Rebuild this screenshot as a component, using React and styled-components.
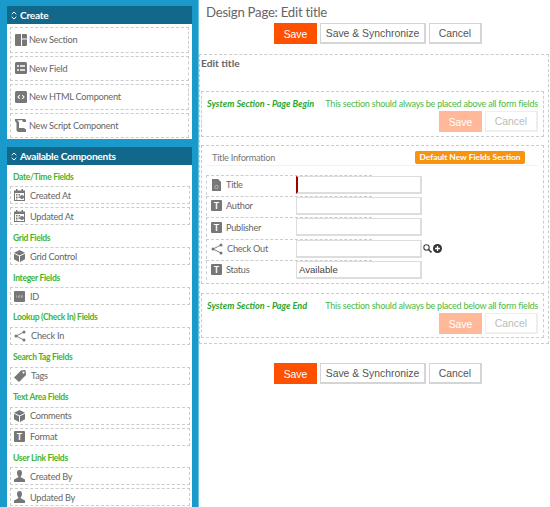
import React from "react";
import styled, { createGlobalStyle } from "styled-components";

const Global = createGlobalStyle`
  html, body { margin: 0; padding: 0; background: #fff; }
  body { font-family: "Lato", "Liberation Sans", sans-serif; color: #555; overflow: hidden; }
  * { box-sizing: border-box; }
`;

const Page = styled.div`
  display: flex;
  width: 550px;
  height: 507px;
  overflow: hidden;
`;
const Sidebar = styled.aside`
  width: 198px;
  flex: none;
  background: #1a9acb;
  padding: 6px 6px 0 7px;
  display: flex;
  flex-direction: column;
  gap: 8px;
  overflow: hidden;
`;
const Panel = styled.section`
  background: #fff;
  flex: ${p => (p.$grow ? 1 : "none")};
`;
const PanelHead = styled.h3`
  margin: 0;
  height: 18px;
  background: #12688a;
  color: #fff;
  font: 700 10.2px/18px "Lato", sans-serif;
  letter-spacing: -0.29px;
  display: flex;
  align-items: center;
  gap: 3px;
  padding-left: 4px;
`;
const CreateList = styled.div`
  padding: 3px 3px 1px;
  display: flex;
  flex-direction: column;
  gap: 3px;
`;
const CreateRow = styled.div`
  height: 25.5px;
  border: 1px dashed #ccc;
  display: flex;
  align-items: center;
  gap: 2px;
  padding-left: 4px;
  font-size: 9.2px;
  letter-spacing: -0.25px;
  color: #666;
`;
const CompList = styled.div`
  padding: 0.5px 2px 0 3px;
`;
const GroupLabel = styled.div`
  height: 20.85px;
  padding: 2px 0 0 3px;
  display: flex;
  align-items: center;
  color: #3fb52f;
  font-size: 8.5px;
  letter-spacing: -0.3px;
  font-weight: 700;
  margin-top: ${p => (p.$first ? "0" : "-2px")};
`;
const CompRow = styled.div`
  height: 18px;
  margin-bottom: 3px;
  border: 1px dashed #ccc;
  display: flex;
  align-items: center;
  gap: 5px;
  padding-left: 3px;
  font-size: 9.2px;
  letter-spacing: -0.25px;
  color: #666;
`;
const Tee = styled.span`
  width: 11px;
  height: 11px;
  flex: none;
  background: #777;
  color: #fff;
  font: 700 9px/11px "Lato", sans-serif;
  letter-spacing: 0;
  text-align: center;
  border-radius: 1px;
`;
const Main = styled.main`
  flex: 1;
  min-width: 0;
  border-left: 1px solid #6cc0e0;
  padding-top: 5px;
`;
const Title = styled.h1`
  margin: 0 0 0 7px;
  height: 18px;
  font: 400 13.2px/15px "Lato", sans-serif;
  letter-spacing: -0.25px;
  color: #666;
`;
const BtnBar = styled.div`
  display: flex;
  gap: 3px;
  padding-left: 75px;
`;
const Btn = styled.button`
  height: 21px;
  width: ${p => p.$w}px;
  padding: 1px 0 0;
  border: 1px solid ${p => (p.$primary ? "#ff5000" : "#d5d5d5")};
  border-width: ${p => (p.$primary ? "1px" : "1px 2px 2px 1px")};
  background: ${p => (p.$primary ? "#ff5000" : "#fff")};
  color: ${p => (p.$primary ? "#fff" : "#555")};
  font: 400 10.4px "Liberation Sans", sans-serif;
  opacity: ${p => (p.$faint ? 0.4 : 1)};
`;
const Outer = styled.div`
  margin: 10px 1px 0 0;
  height: 290px;
  border: 1px dashed #ccc;
  padding: 0 4px 0 1px;
`;
const FormName = styled.div`
  height: 36px;
  padding-top: 2px;
  font: 700 10.2px/13px "Lato", sans-serif;
  color: #666;
`;
const SysBox = styled.div`
  height: ${p => p.$h}px;
  border: 1px dashed #ccc;
  padding: 5px 5px 0;
  margin-bottom: 8px;
`;
const SysLine = styled.div`
  display: flex;
  justify-content: space-between;
  height: 14px;
  font-size: 9px;
  letter-spacing: -0.23px;
  line-height: 13px;
  color: #4cb944;
`;
const SysName = styled.b`
  font-style: italic;
  font-size: 9.1px;
  letter-spacing: 0;
  color: #2ba52c;
`;
const SysBtns = styled.div`
  display: flex;
  justify-content: flex-end;
  gap: 3px;
`;
const Section = styled.div`
  height: 139px;
  border: 1px dashed #ccc;
  padding: 5px 5px 0 4px;
  margin-bottom: 9px;
`;
const SecHead = styled.div`
  display: flex;
  align-items: center;
  justify-content: space-between;
  height: 15px;
  padding: 0 13px 2px 6px;
  border-bottom: 1px solid #f2f2f2;
  font-size: 9.2px;
  letter-spacing: -0.25px;
  color: #777;
  margin-bottom: 8px;
`;
const Badge = styled.span`
  background: #f7930e;
  color: #fff;
  font-size: 8.4px;
  letter-spacing: 0;
  font-weight: 700;
  height: 13px;
  line-height: 13px;
  width: 110px;
  text-align: center;
  border-radius: 2px;
`;
const FieldRow = styled.div`
  display: flex;
  align-items: center;
  height: 21.3px;
`;
const FieldLabel = styled.div`
  width: 166px;
  height: 20px;
  flex: none;
  border-top: 1px dashed #ccc;
  border-left: 1px dashed #ccc;
  display: flex;
  align-items: center;
  gap: 4px;
  padding: 0 0 1px 4px;
  font-size: 9.2px;
  letter-spacing: -0.25px;
  color: #666;
`;
const Input = styled.input`
  width: 126px;
  height: 18px;
  margin-left: -76px;
  border: 1px solid #ddd;
  border-width: 1px 2px 2px 1px;
  border-left: ${p => (p.$required ? "2px solid #a00000" : "1px solid #ddd")};
  padding: 0 2px;
  font: 400 9.6px "Liberation Sans", sans-serif;
  color: #444;
  background: #fff;
  outline: none;
`;
const LookupIcons = styled.div`
  display: flex;
  align-items: center;
  gap: 1px;
  margin-left: 1px;
`;
const BottomBar = styled(BtnBar)`
  margin-top: 19px;
`;

const Chevrons = () => (
  <svg width="6" height="9" viewBox="0 0 6 9" fill="none" stroke="#fff" strokeWidth="1">
    <path d="M.7 3.200 3 1l2.300 2.200M.7 5.800 3 8l2.300-2.200" />
  </svg>
);
const Layout = () => (
  <svg width="12" height="12" viewBox="0 0 12 12" fill="#777">
    <path d="M0 1a1 1 0 0 1 1-1h5v12H1a1 1 0 0 1-1-1zM7 0h4a1 1 0 0 1 1 1v3.500H7zM7 5.500h5V11a1 1 0 0 1-1 1H7z" />
  </svg>
);
const ListIco = () => (
  <svg width="12" height="12" viewBox="0 0 12 12">
    <rect width="12" height="12" rx="1.500" fill="#777" />
    <path d="M2 4h2M5 4h5M2 8h2M5 8h5" stroke="#fff" strokeWidth="1.400" />
  </svg>
);
const CodeIco = () => (
  <svg width="12" height="12" viewBox="0 0 12 12">
    <rect width="12" height="12" rx="1.500" fill="#777" />
    <path d="M4.800 4 3 6l1.800 2M7.200 4 9 6 7.200 8" stroke="#fff" strokeWidth="1.100" fill="none" />
  </svg>
);
const ScrollIco = () => (
  <svg width="12" height="13" viewBox="0 0 12 13" fill="#777">
    <path d="M0 0h10l1 1v2H8L7 1 2 1.500 4 3v6h5l2 1.500V13H3L1.500 11.500V4L0 2z" />
    <path d="M5 4.500h4M5 6.500h4" stroke="#fff" strokeWidth=".8" />
  </svg>
);
const Calendar = () => (
  <svg width="11" height="12" viewBox="0 0 11 12" fill="#777">
    <path d="M0 1.500h11V12H0zM1 4v7h9V4z" fillRule="evenodd" />
    <path d="M2 0h1.500v2.500H2zM7.500 0H9v2.500H7.500zM2 5h1.500v1.500H2zM4.500 5H6v1.500H4.500zM2 7.500h1.500V9H2zM4.500 7.500H6V9H4.500zM2 9.500h1.500v1H2z" />
    <circle cx="8" cy="8" r="2" />
  </svg>
);
const Cube = () => (
  <svg width="11" height="12" viewBox="0 0 11 12" fill="#777">
    <path d="M5.500 0 11 2.700 5.500 5.400 0 2.700zM0 3.700l5 2.500V12L0 9.200zM11 3.700 6 6.200V12l5-2.800z" />
  </svg>
);
const Num = () => (
  <svg width="11" height="11" viewBox="0 0 11 11">
    <rect width="11" height="11" rx="1" fill="#777" />
    <path d="M2.500 4.500v2M4.500 4.500h1v1h-1v1h1M7 4.500h1.200v2H7M7 5.500h1" stroke="#ddd" strokeWidth=".5" fill="none" />
  </svg>
);
const Share = () => (
  <svg width="12" height="12" viewBox="0 0 12 12" fill="#777" stroke="#777">
    <path d="M10 2 2 6l8 4" fill="none" strokeWidth=".9" />
    <circle cx="10" cy="2" r="1.500" stroke="none" />
    <circle cx="2" cy="6" r="1.500" stroke="none" />
    <circle cx="10" cy="10" r="1.500" stroke="none" />
  </svg>
);
const Tag = () => (
  <svg width="12" height="12" viewBox="0 0 12 12" fill="#777">
    <path fillRule="evenodd" d="M7 .500 11.500 0 12 5 5 12 0 7.500zM9.500 1.500a1 1 0 1 0 .01 0z" />
  </svg>
);
const User = () => (
  <svg width="11" height="12" viewBox="0 0 11 12" fill="#777">
    <path d="M5.500 0C7.200 0 8 1.200 8 3c0 1.500-.6 2.600-1.300 3.300v1L11 9.500V12H0V9.500l4.300-2.200v-1C3.600 5.600 3 4.500 3 3 3 1.200 3.800 0 5.500 0z" />
  </svg>
);
const DocIco = () => (
  <svg width="11" height="12" viewBox="0 0 11 12">
    <path d="M1 0h6l3 3v9H1z" fill="#777" />
    <circle cx="5.500" cy="8" r="1.700" fill="none" stroke="#ccc" strokeWidth=".7" />
  </svg>
);
const Search = () => (
  <svg width="9" height="9" viewBox="0 0 9 9" fill="none" stroke="#444">
    <circle cx="3.500" cy="3.500" r="2.700" strokeWidth="1.100" />
    <path d="M5.500 5.500 8.500 8.500" strokeWidth="1.700" />
  </svg>
);
const Plus = () => (
  <svg width="9" height="9" viewBox="0 0 9 9">
    <circle cx="4.500" cy="4.500" r="4.500" fill="#333" />
    <path d="M4.500 2v5M2 4.500h5" stroke="#fff" strokeWidth="1.300" />
  </svg>
);

const groups = [
  ["Date/Time Fields", [[Calendar, "Created At"], [Calendar, "Updated At"]]],
  ["Grid Fields", [[Cube, "Grid Control"]]],
  ["Integer Fields", [[Num, "ID"]]],
  ["Lookup (Check In) Fields", [[Share, "Check In"]]],
  ["Search Tag Fields", [[Tag, "Tags"]]],
  ["Text Area Fields", [[Cube, "Comments"], [null, "Format"]]],
  ["User Link Fields", [[User, "Created By"], [User, "Updated By"]]],
];

const Actions = ({ As = BtnBar }) => (
  <As>
    <Btn $primary $w={43}>Save</Btn>
    <Btn $w={106}>Save &amp; Synchronize</Btn>
    <Btn $w={53}>Cancel</Btn>
  </As>
);

const Sys = ({ name, note, h }) => (
  <SysBox $h={h}>
    <SysLine><SysName>{name}</SysName><span>{note}</span></SysLine>
    <SysBtns>
      <Btn $primary $faint $w={43}>Save</Btn>
      <Btn $faint $w={53}>Cancel</Btn>
    </SysBtns>
  </SysBox>
);

export default function App() {
  return (
    <Page>
      <Global />
      <Sidebar>
        <Panel>
          <PanelHead><Chevrons />Create</PanelHead>
          <CreateList>
            <CreateRow><Layout />New Section</CreateRow>
            <CreateRow><ListIco />New Field</CreateRow>
            <CreateRow><CodeIco />New HTML Component</CreateRow>
            <CreateRow><ScrollIco />New Script Component</CreateRow>
          </CreateList>
        </Panel>
        <Panel $grow>
          <PanelHead><Chevrons />Available Components</PanelHead>
          <CompList>
            {groups.map(([label, rows], i) => (
              <React.Fragment key={label}>
                <GroupLabel $first={i === 0}>{label}</GroupLabel>
                {rows.map(([Ico, text]) => (
                  <CompRow key={text}>{Ico ? <Ico /> : <Tee>T</Tee>}{text}</CompRow>
                ))}
              </React.Fragment>
            ))}
          </CompList>
        </Panel>
      </Sidebar>
      <Main>
        <Title>Design Page: Edit title</Title>
        <Actions />
        <Outer>
          <FormName>Edit title</FormName>
          <Sys h={46} name="System Section - Page Begin" note="This section should always be placed above all form fields" />
          <Section>
            <SecHead>Title Information<Badge>Default New Fields Section</Badge></SecHead>
            <FieldRow><FieldLabel><DocIco />Title</FieldLabel><Input $required readOnly /></FieldRow>
            <FieldRow><FieldLabel><Tee>T</Tee>Author</FieldLabel><Input readOnly /></FieldRow>
            <FieldRow><FieldLabel><Tee>T</Tee>Publisher</FieldLabel><Input readOnly /></FieldRow>
            <FieldRow>
              <FieldLabel><Share />Check Out</FieldLabel><Input readOnly />
              <LookupIcons><Search /><Plus /></LookupIcons>
            </FieldRow>
            <FieldRow><FieldLabel><Tee>T</Tee>Status</FieldLabel><Input readOnly value="Available" /></FieldRow>
          </Section>
          <Sys h={45} name="System Section - Page End" note="This section should always be placed below all form fields" />
        </Outer>
        <Actions As={BottomBar} />
      </Main>
    </Page>
  );
}
